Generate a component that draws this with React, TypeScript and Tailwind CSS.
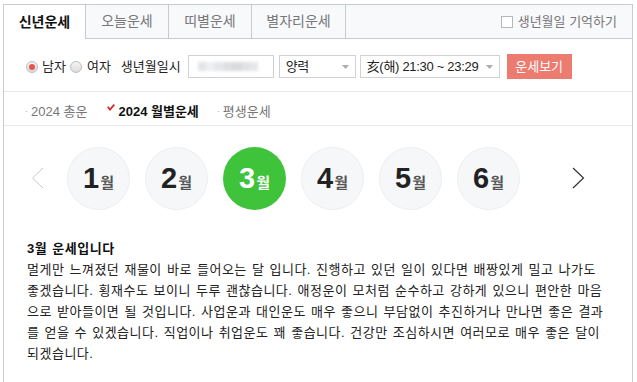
import React from "react";

const months = [1, 2, 3, 4, 5, 6];

function Radio({ checked }: { checked?: boolean }) {
  return (
    <span className="w-[12px] h-[12px] rounded-full border border-[#b9bcc2] bg-gradient-to-b from-[#f4f4f4] to-[#dcdcdc] flex items-center justify-center">
      {checked && <span className="w-[6px] h-[6px] rounded-full bg-[#e8554c]" />}
    </span>
  );
}

function SelectBox({ label, width }: { label: string; width: string }) {
  return (
    <div className={`${width} h-[23px] border border-[#cfd1d5] bg-white flex items-center pl-[6px] pr-[6px] text-[13px] text-[#222]`}>
      <span className="flex-1 whitespace-nowrap tracking-[-0.3px]">{label}</span>
      <svg width="7" height="4" viewBox="0 0 7 4">
        <polygon points="0,0 7,0 3.5,4" fill="#a9abaf" />
      </svg>
    </div>
  );
}

export default function App() {
  return (
    <div className="w-[637px] h-[382px] bg-white pl-[3px] pt-[4px] overflow-hidden font-['Liberation_Sans','Noto_Sans_CJK_KR',sans-serif]">
      <div className="w-[630px] h-[400px] border-l border-r border-[#c6cad1]">
        {/* Tabs */}
        <div className="flex h-[35px] border-t border-[#c6cad1] bg-[#f8f9fb] text-[14px]">
          <div className="w-[82px] bg-white border-r border-[#c6cad1] flex items-center justify-center font-bold text-[#111]">
            신년운세
          </div>
          <div className="w-[83px] border-r border-b border-[#c6cad1] flex items-center justify-center text-[#777]">
            오늘운세
          </div>
          <div className="w-[83px] border-r border-b border-[#c6cad1] flex items-center justify-center text-[#777]">
            띠별운세
          </div>
          <div className="w-[94px] border-r border-b border-[#c6cad1] flex items-center justify-center text-[#777]">
            별자리운세
          </div>
          <div className="flex-1 border-b border-[#c6cad1] flex items-center justify-end pr-[15px] gap-[5px] text-[13px] text-[#777]">
            <span className="w-[12px] h-[12px] border border-[#b4b7bd] bg-white" />
            <span>생년월일 기억하기</span>
          </div>
        </div>

        {/* Form row */}
        <div className="h-[53px] border-b border-[#e6e8ec] flex items-center pt-[3px] pl-[22px] text-[13px] text-[#222]">
          <Radio checked />
          <span className="ml-[4px]">남자</span>
          <span className="ml-[4px]"><Radio /></span>
          <span className="ml-[5px]">여자</span>
          <span className="ml-[10px]">생년월일시</span>
          <div className="ml-[7px] w-[86px] h-[23px] border border-[#cfd1d5] flex items-center pl-[9px] gap-0">
            <div className="flex blur-[1.5px] opacity-70">
              <span className="w-[8px] h-[9px] bg-[#d7d9dc]" />
              <span className="w-[8px] h-[9px] bg-[#e6e8eb]" />
              <span className="w-[10px] h-[9px] bg-[#d9dde2]" />
              <span className="w-[8px] h-[9px] bg-[#cfd1d4]" />
              <span className="w-[10px] h-[9px] bg-[#c9cbce]" />
              <span className="w-[8px] h-[9px] bg-[#d4d6d9]" />
              <span className="w-[8px] h-[9px] bg-[#dcdee1]" />
            </div>
          </div>
          <div className="ml-[5px]">
            <SelectBox label="양력" width="w-[77px]" />
          </div>
          <div className="ml-[4px]">
            <SelectBox label="亥(해) 21:30 ~ 23:29" width="w-[140px]" />
          </div>
          <button className="ml-[7px] w-[65px] h-[25px] bg-[#ec7b70] text-white text-[13px] flex items-center justify-center">
            운세보기
          </button>
        </div>

        {/* Sub tabs */}
        <div className="h-[34px] border-b border-[#e6e8ec] flex items-center pt-[6px] pl-[21px] text-[13px]">
          <span className="text-[#aaa] text-[9px] mr-[3px]">·</span>
          <span className="text-[#777]">2024 총운</span>
          <svg className="ml-[20px] mr-[3px] -mt-[8px]" width="8" height="7" viewBox="0 0 8 7">
            <polyline points="0.8,2.8 3,5.6 7.3,0.6" fill="none" stroke="#e0252b" strokeWidth="1.8" />
          </svg>
          <span className="font-bold text-[#111]">2024 월별운세</span>
          <span className="ml-[18px] text-[#aaa] text-[9px] mr-[3px]">·</span>
          <span className="text-[#777]">평생운세</span>
        </div>

        {/* Months */}
        <div className="flex items-center h-[102px] pt-[2px]">
          <div className="w-[63px] flex justify-center pl-[4px]">
            <svg width="13" height="22" viewBox="0 0 13 22">
              <polyline points="12,1 1.5,11 12,21" fill="none" stroke="#c9c9c9" strokeWidth="1" />
            </svg>
          </div>
          <div className="flex gap-[15px]">
            {months.map((m) => {
              const active = m === 3;
              return (
                <div
                  key={m}
                  className={
                    active
                      ? "w-[63px] h-[63px] rounded-full bg-[#3ec33b] flex items-baseline justify-center pt-[16px] text-white"
                      : "w-[63px] h-[63px] rounded-full bg-[#f6f7f9] border border-[#eceef1] flex items-baseline justify-center pt-[15px] text-[#222]"
                  }
                >
                  <span className="text-[29px] font-bold leading-[30px]">{m}</span>
                  <span className={active ? "text-[15px] font-bold text-white ml-[1px]" : "text-[15px] font-bold text-[#555] ml-[1px]"}>월</span>
                </div>
              );
            })}
          </div>
          <div className="flex-1 flex justify-center pl-[4px]">
            <svg width="13" height="22" viewBox="0 0 13 22">
              <polyline points="1,1 11.5,11 1,21" fill="none" stroke="#333" strokeWidth="1.2" />
            </svg>
          </div>
        </div>

        {/* Description */}
        <div className="pl-[23px] pt-[10px] text-[13px] leading-[21px] text-[#222] tracking-[0.5px] [word-spacing:1px]">
          <div className="font-bold text-[#111]">3월 운세입니다</div>
          <p className="whitespace-nowrap">
            멀게만 느껴졌던 재물이 바로 들어오는 달 입니다. 진행하고 있던 일이 있다면 배짱있게 밀고 나가도
            <br />
            좋겠습니다. 횡재수도 보이니 두루 괜찮습니다. 애정운이 모처럼 순수하고 강하게 있으니 편안한 마음
            <br />
            으로 받아들이면 될 것입니다. 사업운과 대인운도 매우 좋으니 부담없이 추진하거나 만나면 좋은 결과
            <br />
            를 얻을 수 있겠습니다. 직업이나 취업운도 꽤 좋습니다. 건강만 조심하시면 여러모로 매우 좋은 달이
            <br />
            되겠습니다.
          </p>
        </div>
      </div>
    </div>
  );
}
